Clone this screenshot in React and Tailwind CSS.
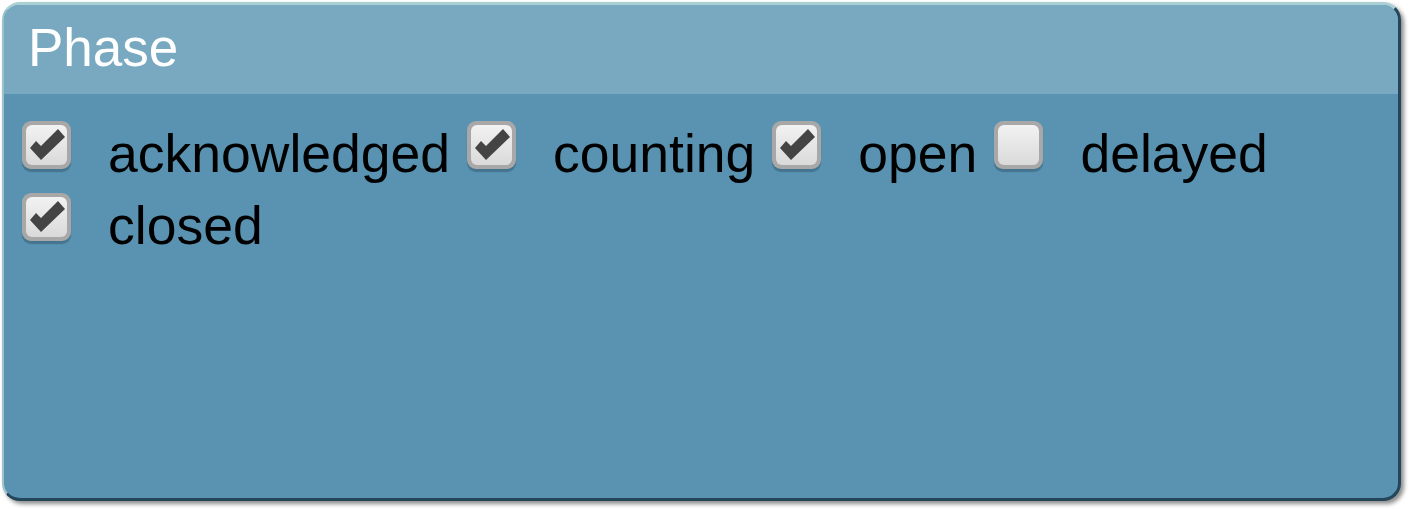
import React from "react";

const items = [
  { label: "acknowledged", checked: true },
  { label: "counting", checked: true },
  { label: "open", checked: true },
  { label: "delayed", checked: false },
  { label: "closed", checked: true },
];

function Box({ checked }) {
  return (
    <div className="mt-[3px] mr-[37px] h-[48px] w-[49px] shrink-0 rounded-[9px] bg-[#a8a8a8] p-[4px] shadow-[0_3px_1px_rgba(30,60,80,0.35)]">
      <div className="relative h-full w-full rounded-[6px] bg-gradient-to-b from-[#f2f2f2] to-[#dadada]">
        {checked && (
          <svg
            className="absolute left-[-4px] top-[-4px]"
            width="49"
            height="48"
            viewBox="0 0 49 48"
          >
            <polygon
              points="8,27 14,20 19,25 36,8 43,16 19,39"
              fill="#444444"
            />
          </svg>
        )}
      </div>
    </div>
  );
}

export default function App() {
  return (
    <div className="h-[509px] w-[1409px] bg-white pl-[2px] pt-[2px]">
      <div className="flex h-[499px] w-[1399px] flex-col overflow-hidden rounded-[18px] border-b-[3px] border-l-[2px] border-r-[3px] border-t-[3px] border-b-[#23465a] border-l-[#9cc3cc] border-r-[#23465a] border-t-[#a9d0d2] bg-[#5993b1] shadow-[3px_3px_4px_rgba(0,0,0,0.45)]">
        <div
          className="h-[89px] shrink-0 bg-[#79a9c0] pl-[24px] pt-[7px] text-[53px] leading-[72px] text-white"
          style={{ fontFamily: '"Liberation Sans", Arial, sans-serif' }}
        >
          Phase
        </div>
        <div
          className="flex flex-wrap pl-[18px] pt-[24px] text-[53.5px] leading-[72px] text-black"
          style={{ fontFamily: '"Liberation Sans", Arial, sans-serif' }}
        >
          {items.map((it) => (
            <div key={it.label} className="flex items-start">
              <Box checked={it.checked} />
              <span className="mr-[17px]">{it.label}</span>
            </div>
          ))}
        </div>
      </div>
    </div>
  );
}
